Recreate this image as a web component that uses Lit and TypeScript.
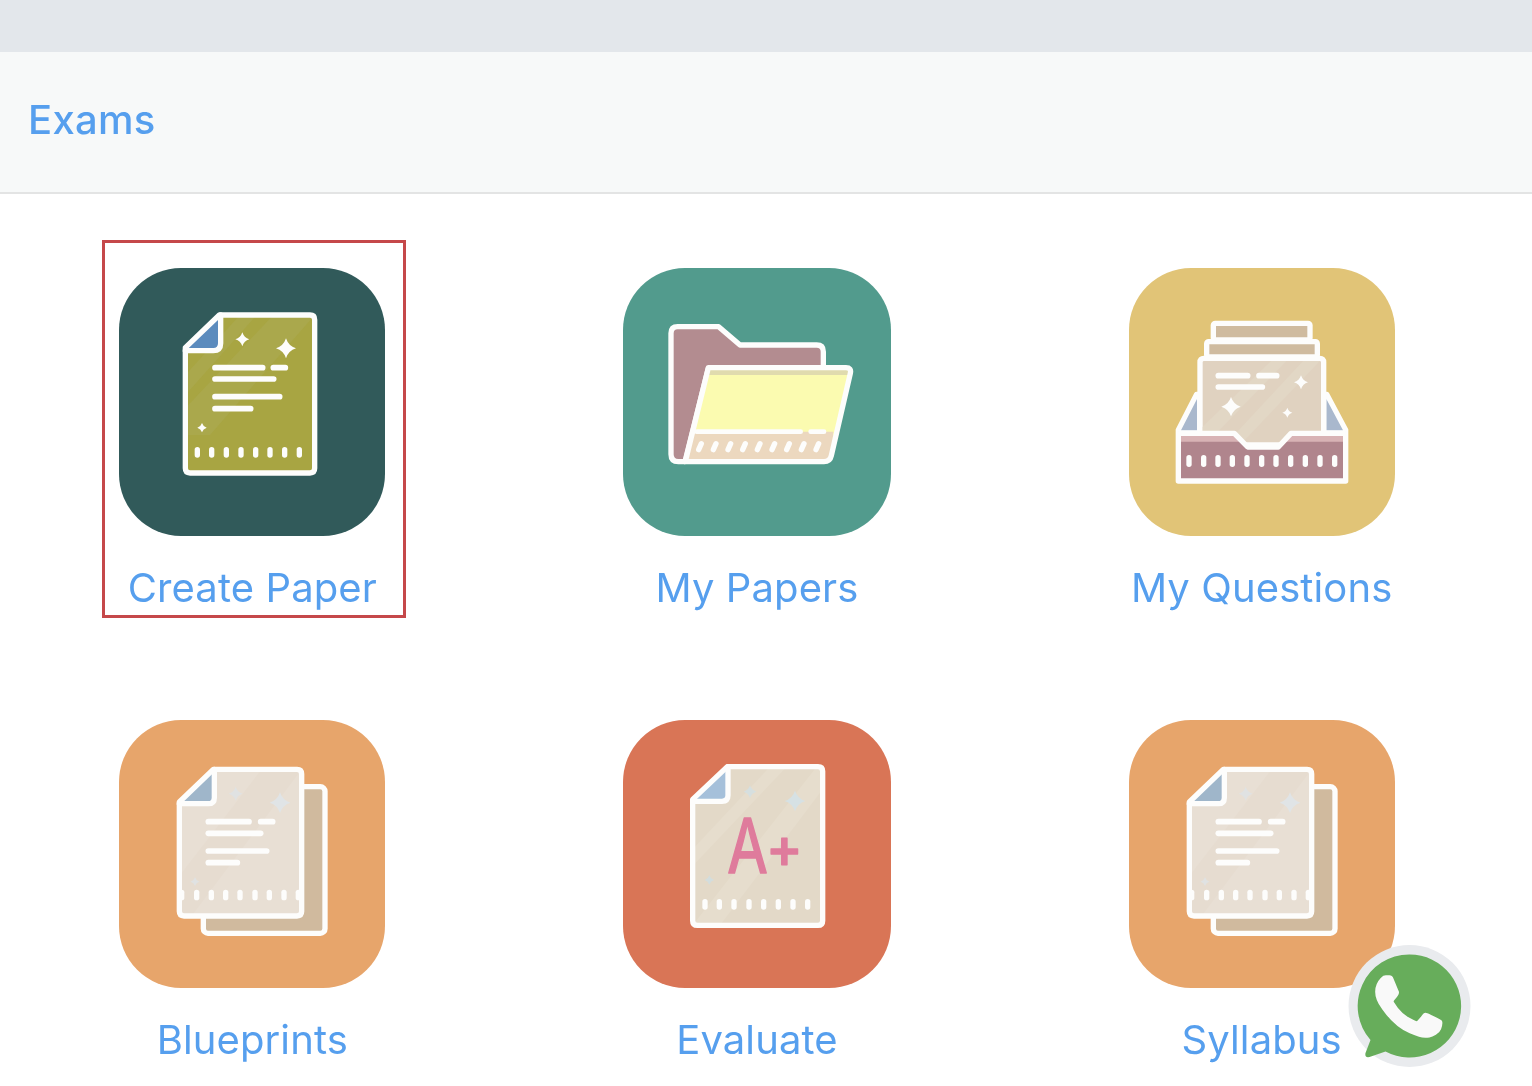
import { LitElement, html, css, svg } from "lit";
import { customElement } from "lit/decorators.js";

const WHITE = "#fdfdfc";

const spark = (x: number, y: number, r: number, fill = WHITE) => {
  const k = r * 0.24;
  return svg`<path fill=${fill} d="M${x} ${y - r}Q${x + k} ${y - k} ${x + r} ${y}Q${x + k} ${y + k} ${x} ${y + r}Q${x - k} ${y + k} ${x - r} ${y}Q${x - k} ${y - k} ${x} ${y - r}Z"/>`;
};
const dots = (xs: number[], y: number, h = 32, w = 16, skew = 0) =>
  xs.map(
    (x) =>
      svg`<line x1=${x + skew} y1=${y - h / 2 + w / 2} x2=${x - skew} y2=${y + h / 2 - w / 2} stroke=${WHITE} stroke-width=${w} stroke-linecap="round"/>`
  );
const rules = (items: [number, number, number][], w = 17) =>
  items.map(
    ([a, b, y]) =>
      svg`<line x1=${a} y1=${y} x2=${b} y2=${y} stroke=${WHITE} stroke-width=${w} stroke-linecap="round"/>`
  );

const tile = (vb: number[], color: string, body: unknown) => svg`
  <svg class="art" viewBox=${vb.join(" ")} xmlns="http://www.w3.org/2000/svg">
    <rect x=${vb[0]} y=${vb[1]} width=${vb[2]} height=${vb[3]} rx="186" fill=${color}/>
    ${body}
  </svg>`;

const band = (color: string, clip: string, polys: string[]) =>
  svg`<g clip-path=${`url(#${clip})`}>${polys.map((p) => svg`<polygon points=${p} fill=${color}/>`)}</g>`;

const createPaper = tile(
  [57, 99, 798, 804],
  "#315a5a",
  svg`
  <clipPath id="c1"><rect x="256" y="240" width="388" height="474"/></clipPath>
  <path d="M358 240H630Q644 240 644 254V700Q644 714 630 714H270Q256 714 256 700V338Z" fill="#a8a542"/>
  ${band("#aaa84c", "c1", ["520 240 644 240 330 600 256 600 256 520", "420 240 470 240 256 480 256 420"])}
  <path d="M256 342L358 244V325Q358 342 342 342Z" fill="#5b8bbd"/>
  <path d="M358 240H630Q644 240 644 254V700Q644 714 630 714H270Q256 714 256 700V338Z" fill="none" stroke=${WHITE} stroke-width="16" stroke-linejoin="round"/>
  <path d="M362 240V325Q362 347 340 347H256" fill="none" stroke=${WHITE} stroke-width="16" stroke-linecap="round"/>
  ${rules([[345, 488, 398], [520, 556, 398], [345, 521, 432], [345, 539, 485], [345, 452, 521]])}
  ${spark(427, 313, 21)}${spark(558, 340, 30)}${spark(306, 578, 14)}
  ${dots([292, 335, 379, 423, 467, 510, 554, 598], 652)}
`
);

const myPapers = tile(
  [9, 9, 804, 804],
  "#529b8d",
  svg`
  <path d="M195 590H175Q153 590 153 568V205Q153 185 173 185H296L360 240H590Q610 240 610 260V310H265Z" fill="#b38c90" stroke=${WHITE} stroke-width="16" stroke-linejoin="round"/>
  <path d="M265 308H678Q695 308 691 325L634 572Q630 590 612 590H196Z" fill="#fbfbb0"/>
  <path d="M265 308H678Q695 308 692 330H258Z" fill="#e0dbae"/>
  <path d="M224 500H640L634 572Q630 590 612 590H196Z" fill="#ecd8bf"/>
  <path d="M265 308H678Q695 308 691 325L634 572Q630 590 612 590H196Z" fill="none" stroke=${WHITE} stroke-width="16" stroke-linejoin="round"/>
  ${rules([[230, 542, 500], [572, 612, 500]], 14)}
  ${dots([240, 284, 328, 372, 416, 460, 504, 548, 592], 545, 34, 16, 4)}
`
);

const myQuestions = tile(
  [12, 9, 798, 804],
  "#e1c477",
  svg`
  <clipPath id="c3"><rect x="233" y="288" width="355" height="256"/></clipPath>
  <path d="M160 495L215 388H605L662 495V648H160Z" fill=${WHITE} stroke=${WHITE} stroke-width="16" stroke-linejoin="round"/>
  <path d="M168 496L216 402V496ZM654 496L604 402V496Z" fill="#a9b8cd"/>
  <rect x="265" y="175" width="290" height="50" rx="6" fill="#cfbb9f" stroke=${WHITE} stroke-width="16"/>
  <rect x="245" y="230" width="332" height="46" rx="6" fill="#cfbb9f" stroke=${WHITE} stroke-width="16"/>
  <path d="M225 540V292Q225 280 237 280H584Q596 280 596 292V540Z" fill="#e0d2c0" stroke=${WHITE} stroke-width="16"/>
  ${band("#e2d7c5", "c3", ["445 282 490 282 240 540 228 540 228 490", "540 282 590 282 345 540 300 540"])}
  <path d="M168 512H328L368 548H460L498 512H654V640H168Z" fill="#b0858d"/>
  <path d="M168 512H328L350 530H168ZM498 512H654V530H478Z" fill="#d8b3b5"/>
  <path d="M160 505H328L368 546H460L498 505H662" fill="none" stroke=${WHITE} stroke-width="16" stroke-linejoin="round"/>
  ${rules([[280, 368, 332], [402, 455, 332], [280, 412, 366]])}
  ${spark(318, 425, 29)}${spark(528, 352, 21)}${spark(487, 443, 15)}
  ${dots([192, 236, 279, 322, 366, 410, 453, 497, 541, 585, 629], 588, 36)}
`
);

const paperStack = (id: string) =>
  tile(
    [12, 12, 798, 804],
    "#e7a56b",
    svg`
  <clipPath id=${id}><rect x="193" y="160" width="367" height="440"/></clipPath>
  <rect x="265" y="212" width="365" height="440" rx="14" fill="#d0ba9e" stroke=${WHITE} stroke-width="16"/>
  <path d="M295 160H546Q560 160 560 174V586Q560 600 546 600H207Q193 600 193 586V258Z" fill="#e8dfd4"/>
  ${band("#e6dcd0", id, ["440 160 560 160 230 600 193 600 193 480"])}
  <path d="M193 260L295 164V242Q295 260 277 260Z" fill="#9fb6ca"/>
  <path d="M295 160H546Q560 160 560 174V586Q560 600 546 600H207Q193 600 193 586V258Z" fill="none" stroke=${WHITE} stroke-width="16" stroke-linejoin="round"/>
  <path d="M298 160V245Q298 263 280 263H193" fill="none" stroke=${WHITE} stroke-width="16" stroke-linecap="round"/>
  ${rules([[280, 402, 317], [437, 473, 317], [280, 437, 352], [280, 455, 405], [280, 367, 440]])}
  ${spark(362, 233, 21, "#e0e2e2")}${spark(495, 260, 31, "#e0e4e6")}${spark(240, 497, 13, "#e0e2e2")}
  ${dots([200, 245, 289, 332, 375, 420, 463, 507, 550], 537)}
`
  );

const evaluate = tile(
  [9, 12, 804, 804],
  "#d97556",
  svg`
  <clipPath id="c5"><rect x="218" y="152" width="390" height="476"/></clipPath>
  <path d="M322 152H594Q608 152 608 166V614Q608 628 594 628H232Q218 628 218 614V250Z" fill="#e3d9c8"/>
  ${band("#e6ddcd", "c5", ["450 152 500 152 218 450 218 400", "590 152 608 152 608 220 300 628 218 628"])}
  <path d="M218 254L322 156V238Q322 254 306 254Z" fill="#a5c0da"/>
  <path d="M322 152H594Q608 152 608 166V614Q608 628 594 628H232Q218 628 218 614V250Z" fill="none" stroke=${WHITE} stroke-width="16" stroke-linejoin="round"/>
  <path d="M324 152V238Q324 256 306 256H218" fill="none" stroke=${WHITE} stroke-width="16" stroke-linecap="round"/>
  <text transform="translate(322 472) scale(.78 1)" font-family="Inter, 'Liberation Sans', sans-serif" font-size="226" font-weight="400" fill="#df7b9c" stroke="#df7b9c" stroke-width="5" stroke-linejoin="round">A</text>
  <text x="438" y="452" font-family="Inter, 'Liberation Sans', sans-serif" font-size="165" font-weight="500" fill="#df7b9c" stroke="#df7b9c" stroke-width="4" stroke-linejoin="round">+</text>
  ${spark(390, 227, 19, "#d6dfdf")}${spark(525, 255, 31, "#d6e1e4")}${spark(268, 492, 14, "#d3dddd")}
  ${dots([255, 298, 342, 387, 431, 475, 519, 563], 565)}
`
);

const phone =
  "M17.472 14.382c-.297-.149-1.758-.867-2.03-.967-.273-.099-.471-.148-.67.15-.197.297-.767.966-.94 1.164-.173.199-.347.223-.644.075-.297-.15-1.255-.463-2.39-1.475-.883-.788-1.48-1.761-1.653-2.059-.173-.297-.018-.458.13-.606.134-.133.298-.347.446-.52.149-.174.198-.298.298-.497.099-.198.05-.371-.025-.52-.075-.149-.669-1.612-.916-2.207-.242-.579-.487-.5-.669-.51-.173-.008-.371-.01-.57-.01-.198 0-.52.074-.792.372-.272.297-1.04 1.016-1.04 2.479 0 1.462 1.065 2.875 1.213 3.074.149.198 2.096 3.2 5.077 4.487.709.306 1.262.489 1.694.625.712.227 1.36.195 1.871.118.571-.085 1.758-.719 2.006-1.413.248-.694.248-1.289.173-1.413-.074-.124-.272-.198-.57-.347z";

const items = [
  { label: "Create Paper", art: createPaper, w: 266, selected: true },
  { label: "My Papers", art: myPapers, w: 268 },
  { label: "My Questions", art: myQuestions, w: 266 },
  { label: "Blueprints", art: paperStack("c4"), w: 266 },
  { label: "Evaluate", art: evaluate, w: 268 },
  { label: "Syllabus", art: paperStack("c6"), w: 266 },
];

@customElement("app-root")
export class AppRoot extends LitElement {
  static styles = css`
    :host {
      display: block;
      position: relative;
      height: 1086px;
      overflow: hidden;
      background: #fff;
      font-family: Inter, "Liberation Sans", sans-serif;
      color: #569fee;
    }
    .topbar {
      height: 52px;
      background: #e3e7eb;
    }
    .header {
      box-sizing: border-box;
      height: 142px;
      display: flex;
      align-items: center;
      padding: 0 0 6px 28px;
      background: #f7f9f9;
      border-bottom: 2px solid #e3e4e4;
    }
    .title {
      font-size: 40px;
      font-weight: 500;
      letter-spacing: 0.3px;
      filter: blur(0.4px);
    }
    .grid {
      display: grid;
      grid-template-columns: repeat(3, 1fr);
      row-gap: 109px;
      padding: 74px 18px 0 0;
      justify-items: center;
    }
    .cell {
      position: relative;
      display: flex;
      flex-direction: column;
      align-items: center;
    }
    .cell.selected::after {
      content: "";
      position: absolute;
      inset: -28px -21px -7px -17px;
      border: 3px solid #c5484a;
      pointer-events: none;
      filter: blur(0.4px);
    }
    .art {
      display: block;
      height: 268px;
      width: 100%;
      filter: blur(0.6px);
    }
    .label {
      margin-top: 29px;
      font-size: 40px;
      line-height: 46px;
      letter-spacing: 0.1px;
      white-space: nowrap;
      filter: blur(0.4px);
    }
    .chat {
      position: absolute;
      left: 1348px;
      top: 944px;
      width: 123px;
      height: 124px;
      filter: blur(0.5px);
    }
  `;

  render() {
    return html`
      <div class="topbar"></div>
      <div class="header"><span class="title">Exams</span></div>
      <div class="grid">
        ${items.map(
          (it) => html`
            <div class="cell ${it.selected ? "selected" : ""}" style="width:${it.w}px">
              ${it.art}
              <div class="label">${it.label}</div>
            </div>
          `
        )}
      </div>
      <svg class="chat" viewBox="0 0 123 124" xmlns="http://www.w3.org/2000/svg">
        <circle cx="61.5" cy="62" r="61" fill="#e9ebee"/>
        <path d="M61.5 10.5a51.5 51.5 0 1 1-24 97l-16 5.5q-5 1-4-4l5-13a51.5 51.5 0 0 1 39-85.5z" fill="#67ad5b"/>
        <g transform="translate(61 62.5) scale(5.4) translate(-12.1 -12)"><path d=${phone} fill="#f9f9f9" stroke="#f9f9f9" stroke-width=".35" stroke-linejoin="round"/></g>
      </svg>
    `;
  }
}
